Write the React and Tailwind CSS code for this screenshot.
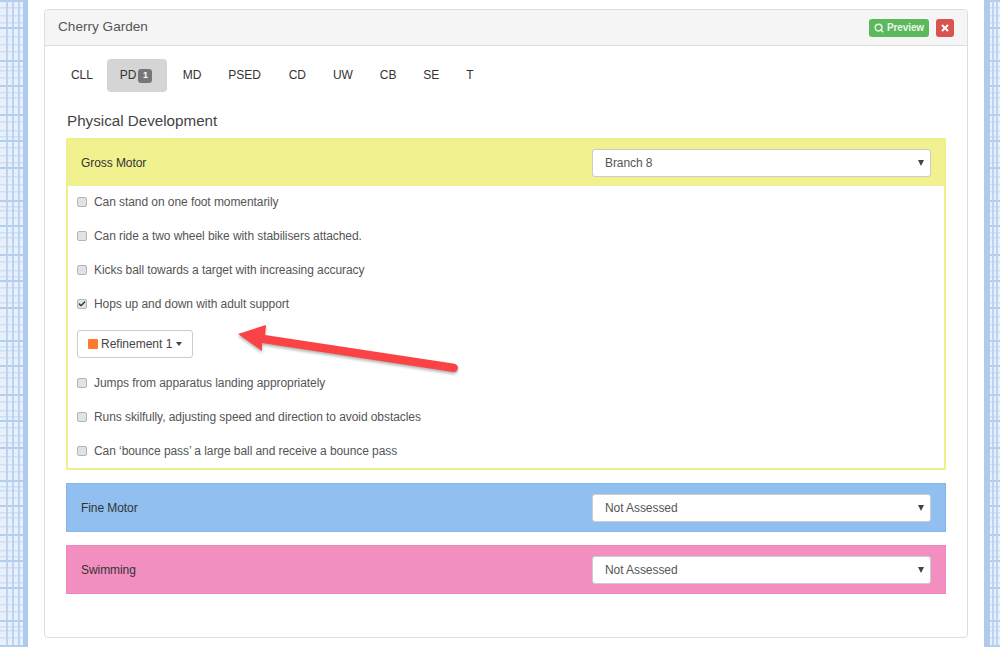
import { Check, Search, X } from 'lucide-react';

const tabs = ['CLL', 'PD', 'MD', 'PSED', 'CD', 'UW', 'CB', 'SE', 'T'];

const Plaid = ({ id, stripes, solidX, solidW }) => {
    // hand-picked offsets so the texture looks woven rather than regular
    const offsets = [0, 7, 15, 22, 27, 36, 44, 51, 60, 66];
    const ys = Array.from({ length: 100 }, (_, i) => Math.floor(i / 10) * 70 + offsets[i % 10]);
    return (
        <svg className="block h-full w-full">
            <rect width="100%" height="100%" fill="#e8f1fb" />
            {ys.map((y, i) => (
                <rect key={`${id}y${i}`} x="0" y={y} width="28" height={i % 4 === 0 ? 2 : 1.5} fill={i % 4 === 0 ? '#b3cded' : '#cfe0f5'} />
            ))}
            {stripes.map((x, i) => (
                <rect key={`${id}x${i}`} x={x} y="0" width="2" height="647" fill="#b7d0ef" opacity="0.9" />
            ))}
            <rect x={solidX} y="0" width={solidW} height="647" fill="#aecbee" />
        </svg>
    );
};

const CheckRow = ({ label, checked }) => (
    <div className="flex h-[34px] items-center pl-[9px] text-[12px] tracking-[-0.07px] text-[#555]">
        <span className="mr-[7px] flex h-[10px] w-[10px] items-center justify-center rounded-[2px] border border-[#b5b5b5] bg-[#e2e2e2]">
            {checked && <Check size={8} strokeWidth={4} className="text-[#333]" />}
        </span>
        {label}
    </div>
);

const SelectBox = ({ value }) => (
    <div className="flex h-[28px] w-[339px] items-center justify-between rounded-[3px] border border-[#ccc] bg-white pl-[12px] pr-[6px] text-[12px] tracking-[-0.07px] text-[#555]">
        {value}
        <span className="h-0 w-0 border-x-[3.5px] border-t-[6px] border-x-transparent border-t-[#444]" />
    </div>
);

const PanelHeader = ({ title, value, className }) => (
    <div className={`flex items-center justify-between text-[12px] tracking-[-0.07px] text-[#333] ${className}`}>
        {title}
        <SelectBox value={value} />
    </div>
);

export default function App() {
    const arrow = 'M238 334 L266 325 L265 335 L453 363.5 Q458 364 458 368 Q457 372.5 453 372 L262 343 L262 351 Z';

    return (
        <div className="relative flex h-[647px] w-[1000px] overflow-hidden bg-white font-['Liberation_Sans',Arial,sans-serif]">
            <div className="w-[28px] shrink-0"><Plaid id="l" stripes={[6, 12, 18]} solidX={23} solidW={5} /></div>

            <main className="flex-1 pl-[16px] pr-[16px] pt-[9px]">
                <div className="h-[629px] rounded-[4px] border border-[#ddd] bg-white">
                    <div className="flex h-[36px] items-center justify-between rounded-t-[4px] border-b border-[#ddd] bg-[#f5f5f5] pl-[13px] pr-[13px]">
                        <span className="-mt-px text-[13.6px] text-[#555]">Cherry Garden</span>
                        <div className="flex items-center gap-[7px]">
                            <button className="flex h-[18px] w-[60px] items-center justify-center gap-[3px] rounded-[3px] bg-[#5cb85c] text-[10px] font-bold tracking-[-0.1px] text-[#e8f5e8]">
                                <Search size={10} strokeWidth={3.5} />
                                Preview
                            </button>
                            <button className="flex h-[18px] w-[18px] items-center justify-center rounded-[3px] bg-[#d9534f] text-white">
                                <X size={10} strokeWidth={4.5} />
                            </button>
                        </div>
                    </div>

                    <div className="pl-[21px] pr-[21px] pt-[13px]">
                        <nav className="-ml-[8px] flex h-[33px] gap-[1px] text-[12px] tracking-[-0.07px] text-[#333]">
                            {tabs.map((t) => (
                                <div key={t} className={`flex items-center rounded-[4px] px-[13px] ${t === 'PD' ? 'mr-[2px] w-[60px] bg-[#d5d5d5]' : ''} ${t === 'PSED' ? 'mr-[1px]' : ''}`}>
                                    <span className="-mt-px">{t}</span>
                                    {t === 'PD' && (
                                        <span className="ml-[2px] flex h-[14px] w-[14px] shrink-0 items-center justify-center rounded-[3px] bg-[#777] text-[9px] font-bold text-white">1</span>
                                    )}
                                </div>
                            ))}
                        </nav>

                        <h2 className="mt-[20px] h-[26px] pl-px text-[15.2px] leading-[18px] text-[#444]">Physical Development</h2>

                        <section className="h-[332px] border-2 border-[#eef08c]">
                            <PanelHeader title="Gross Motor" value="Branch 8" className="h-[46px] bg-[#f1f190] pl-[13px] pr-[13px]" />
                            <div className="-mt-px">
                                <CheckRow label="Can stand on one foot momentarily" />
                                <CheckRow label="Can ride a two wheel bike with stabilisers attached." />
                                <CheckRow label="Kicks ball towards a target with increasing accuracy" />
                                <CheckRow label="Hops up and down with adult support" checked />
                                <div className="flex h-[45px] items-center pl-[9px]">
                                    <button className="flex h-[28px] w-[116px] items-center rounded-[3px] border border-[#ccc] bg-white pl-[10px] text-[12px] text-[#444]">
                                        <span className="mr-[3px] h-[10px] w-[10px] rounded-[1px] bg-[#ff7a2f]" />
                                        Refinement 1
                                        <span className="ml-[4px] h-0 w-0 border-x-[3.5px] border-t-[4px] border-x-transparent border-t-[#444]" />
                                    </button>
                                </div>
                                <CheckRow label="Jumps from apparatus landing appropriately" />
                                <CheckRow label="Runs skilfully, adjusting speed and direction to avoid obstacles" />
                                <CheckRow label="Can ‘bounce pass’ a large ball and receive a bounce pass" />
                            </div>
                        </section>

                        <PanelHeader title="Fine Motor" value="Not Assessed" className="mt-[13px] h-[49px] border border-[#87b6ea] bg-[#90bff0] pl-[14px] pr-[14px]" />
                        <PanelHeader title="Swimming" value="Not Assessed" className="mt-[13px] h-[49px] border border-[#ec88b8] bg-[#f28fc0] pl-[14px] pr-[14px]" />
                    </div>
                </div>
            </main>

            <div className="w-[16px] shrink-0"><Plaid id="r" stripes={[8, 12]} solidX={0} solidW={6} /></div>

            <svg className="pointer-events-none absolute left-0 top-0" width="1000" height="647">
                <path d={arrow} fill="#000" opacity="0.3" transform="translate(0 2)" className="blur-[1.5px]" />
                <path d={arrow} fill="#fb4346" />
            </svg>
        </div>
    );
}
